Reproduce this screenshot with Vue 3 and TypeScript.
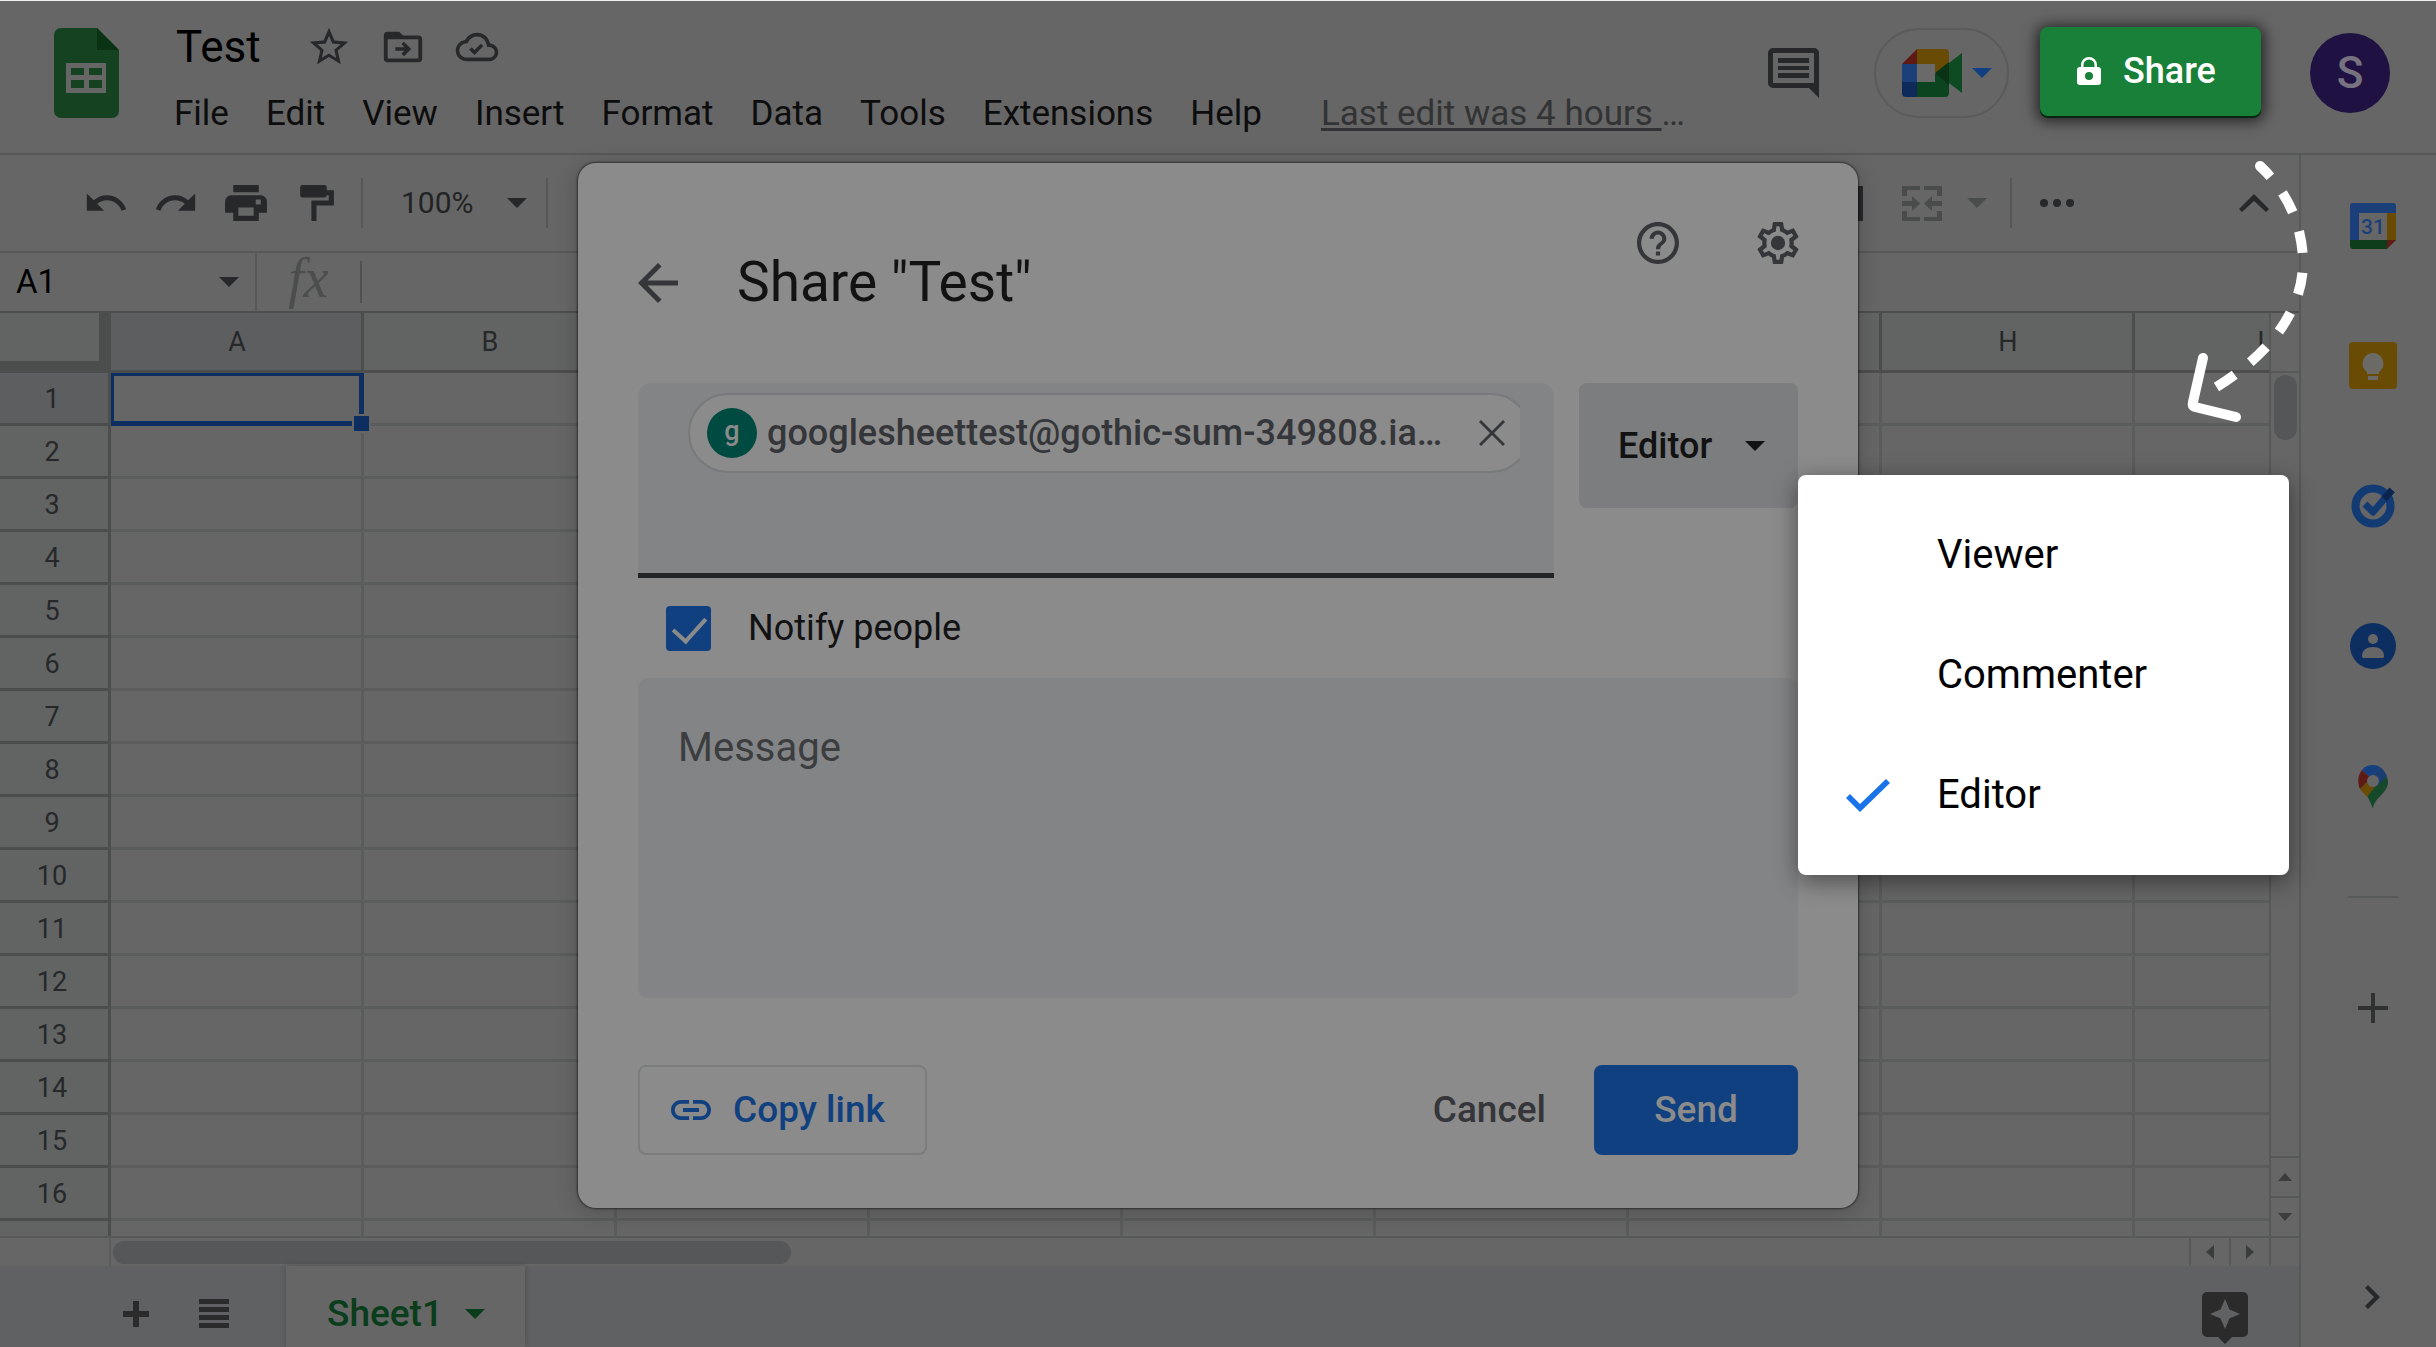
<script setup lang="ts">
import { ref } from 'vue'

const menus: string[] = ['File', 'Edit', 'View', 'Insert', 'Format', 'Data', 'Tools', 'Extensions', 'Help']
const columns: string[] = ['A', 'B', 'C', 'D', 'E', 'F', 'G', 'H', 'I']
const rows: (number | null)[] = [...Array.from({ length: 16 }, (_, i) => i + 1), null]
const roles: string[] = ['Viewer', 'Commenter', 'Editor']

const title = ref('Test')
const role = ref('Editor')
const zoom = ref('100%')
const cell = ref('A1')
const formula = ref('')
const people = ref('')
const notify = ref(true)
const message = ref('')
</script>

<template>
  <div class="app">
    <header class="header">
      <svg class="logo" viewBox="0 0 65 90" aria-hidden="true">
        <path fill="#154321" d="M7 0h36l22 22v61a7 7 0 0 1-7 7H7a7 7 0 0 1-7-7V7a7 7 0 0 1 7-7z" />
        <path fill="#0a3316" d="M43 0l22 22H43z" />
        <path fill="#666" fill-rule="evenodd" d="M12 35h40v30H12zM17 40v7h13v-7zM35 40v7h13v-7zM17 52v8h13v-8zM35 52v8h13v-8z" />
      </svg>
      <div class="doc">
        <div class="title-row">
          <input v-model="title" class="title" aria-label="Document title" />
          <button class="icon-btn" aria-label="Star">
            <svg viewBox="0 0 24 24"><path d="M22 9.24l-7.19-.62L12 2 9.19 8.63 2 9.24l5.46 4.73L5.82 21 12 17.27 18.18 21l-1.63-7.03L22 9.24zM12 15.4l-3.76 2.27 1-4.28-3.32-2.88 4.38-.38L12 6.1l1.71 4.04 4.38.38-3.32 2.88 1 4.28L12 15.4z" /></svg>
          </button>
          <button class="icon-btn" aria-label="Move">
            <svg viewBox="0 0 24 24"><path fill-rule="evenodd" d="M4 4h6l2 2h8a2 2 0 0 1 2 2v10a2 2 0 0 1-2 2H4a2 2 0 0 1-2-2V6a2 2 0 0 1 2-2zm0 4v10h16V8zM12.5 9.2 16.3 13l-3.8 3.8-1.3-1.3 1.5-1.6H8v-1.8h4.7l-1.5-1.6z" /></svg>
          </button>
          <button class="icon-btn" aria-label="Saved to Drive">
            <svg viewBox="-1 -1 26 26"><path d="M19.35 10.04C18.67 6.59 15.64 4 12 4 9.11 4 6.6 5.64 5.35 8.04 2.34 8.36 0 10.91 0 14c0 3.31 2.69 6 6 6h13c2.76 0 5-2.24 5-5 0-2.64-2.05-4.78-4.65-4.96zM19 18H6c-2.21 0-4-1.79-4-4 0-2.05 1.53-3.76 3.56-3.97l1.07-.11.5-.95C8.08 7.14 9.94 6 12 6c2.62 0 4.88 1.86 5.39 4.43l.3 1.5 1.53.11c1.56.1 2.78 1.41 2.78 2.96 0 1.65-1.35 3-3 3z" /><path d="M10.6 16.5l-3-3 1.4-1.4 1.6 1.6 3.6-3.6 1.4 1.4z" /></svg>
          </button>
        </div>
        <nav class="menu-row">
          <button v-for="m in menus" :key="m" class="menu-btn">{{ m }}</button>
          <a href="#" class="last-edit"><span class="underlined">Last edit was 4 hours&nbsp;</span>…</a>
        </nav>
      </div>
      <button class="comments" aria-label="Comments">
        <svg viewBox="0 0 51 50"><path fill-rule="evenodd" d="M5 0h41a5 5 0 0 1 5 5v45L41 40H5a5 5 0 0 1-5-5V5a5 5 0 0 1 5-5zM5 5v30h41V5zM10 10h31v5H10zM10 18h31v4H10zM10 25h31v5H10z" /></svg>
      </button>
      <button class="meet" aria-label="Meet">
        <svg class="meet-logo" viewBox="0 0 60 48">
          <path fill="#5e1b15" d="M0 15 15 0v15z" />
          <path fill="#6a4b04" d="M15 0h28a4 4 0 0 1 4 4v13L33 24v-9H15z" />
          <path fill="#1b4079" d="M0 15h15v18H0z" />
          <path fill="#0d2a5a" d="M0 33h15v15H4a4 4 0 0 1-4-4z" />
          <path fill="#0d4420" d="M15 33h18v-9l14 10v10a4 4 0 0 1-4 4H15z" />
          <path fill="#0e4a22" d="M47 14 60 4v40L47 34z" />
          <path fill="#0a3316" d="M33 24 47 13v23z" />
          <path fill="#6a6a6a" d="M15 15h18v18H15z" />
        </svg>
        <svg class="caret blue" viewBox="0 0 20 10"><path d="M0 0h20L10 10z" /></svg>
      </button>
      <button class="share">
        <svg viewBox="0 0 24 28"><path fill-rule="evenodd" d="M4 10V8a8 8 0 0 1 16 0v2h1a3 3 0 0 1 3 3v12a3 3 0 0 1-3 3H3a3 3 0 0 1-3-3V13a3 3 0 0 1 3-3zm2.500 0h11V8a5.500 5.500 0 0 0-11 0zM12 15a4 4 0 1 0 0 8 4 4 0 0 0 0-8z" /></svg>
        <span>Share</span>
      </button>
      <button class="account" aria-label="Account">S</button>
    </header>

    <div class="body">
      <main class="main">
        <div class="toolbar">
          <button class="icon-btn" aria-label="Undo"><svg viewBox="0 0 24 24"><path d="M12.5 8c-2.65 0-5.05.99-6.9 2.6L2 7v9h9l-3.62-3.62c1.39-1.16 3.16-1.88 5.12-1.88 3.54 0 6.55 2.31 7.6 5.5l2.37-.78C21.08 11.03 17.15 8 12.5 8z" /></svg></button>
          <button class="icon-btn" aria-label="Redo"><svg viewBox="0 0 24 24"><path d="M18.400 10.600C16.550 8.990 14.150 8 11.500 8c-4.650 0-8.580 3.030-9.960 7.220L3.900 16c1.050-3.190 4.050-5.500 7.600-5.500 1.950 0 3.730.72 5.120 1.880L13 16h9V7l-3.600 3.600z" /></svg></button>
          <button class="icon-btn" aria-label="Print"><svg viewBox="-2 -5 45 45"><path fill-rule="evenodd" d="M8 0h25v7H8zM6 10h29a6 6 0 0 1 6 6v11h-8v8H8v-8H0V16a6 6 0 0 1 6-6zM13 22v8h15v-8zM30 14v5h5v-5z" /></svg></button>
          <button class="icon-btn" aria-label="Paint format"><svg viewBox="-7 -5 45 45"><path d="M2 0h22a2 2 0 0 1 2 2v3h7v15H16v15h-5V15h17v-5h-2a2 2 0 0 1-2 2H2a2 2 0 0 1-2-2V2a2 2 0 0 1 2-2z" /></svg></button>
          <span class="divider"></span>
          <label class="zoom">
            <select v-model="zoom" aria-label="Zoom"><option>100%</option></select>
            <svg class="caret" viewBox="0 0 20 10"><path d="M0 0h20L10 10z" /></svg>
          </label>
          <span class="divider"></span>
          <span class="spacer"></span>
          <button class="borders" aria-label="Borders"><svg viewBox="0 0 40 35"><path fill-rule="evenodd" d="M0 0h40v35H0zM5 5v10h12V5zM22 5v10h13V5zM5 20v10h12V20zM22 20v10h13V20z" /></svg></button>
          <button class="merge" aria-label="Merge cells">
            <svg viewBox="0 0 40 35"><path d="M0 0h18v4H5v6H0zM22 0h18v10h-5V4H22zM0 25h5v6h13v4H0zM35 25h5v10H22v-4h13zM0 15h10v-5l8 7.500-8 7.500v-5H0zM40 15H30v-5l-8 7.500 8 7.500v-5h10z" /></svg>
            <svg class="caret faint" viewBox="0 0 20 10"><path d="M0 0h20L10 10z" /></svg>
          </button>
          <span class="divider"></span>
          <button class="more" aria-label="More"><svg viewBox="0 0 34 8"><circle cx="4" cy="4" r="4" /><circle cx="17" cy="4" r="4" /><circle cx="30" cy="4" r="4" /></svg></button>
          <button class="collapse" aria-label="Hide the menus"><svg viewBox="0 0 30 18"><path d="M15 0l15 15-3 3-12-11L3 18l-3-3z" /></svg></button>
        </div>

        <div class="formula-bar">
          <div class="name-box">
            <input v-model="cell" aria-label="Name box" />
            <svg class="caret" viewBox="0 0 20 10"><path d="M0 0h20L10 10z" /></svg>
          </div>
          <span class="fx">fx</span>
          <span class="fx-line"></span>
          <input v-model="formula" class="formula" aria-label="Formula" />
        </div>

        <div class="sheet">
          <div class="grid">
            <table>
              <colgroup>
                <col class="col-num" />
                <col v-for="c in columns" :key="c" class="col-data" />
              </colgroup>
              <thead>
                <tr>
                  <th class="corner"></th>
                  <th v-for="c in columns" :key="c" :class="{ active: c === 'A' }">{{ c }}</th>
                </tr>
              </thead>
              <tbody>
                <tr v-for="(r, i) in rows" :key="i">
                  <th :class="{ active: r === 1 }">{{ r }}</th>
                  <td v-for="c in columns" :key="c">
                    <div v-if="r === 1 && c === 'A'" class="selection"><span class="handle"></span></div>
                  </td>
                </tr>
              </tbody>
            </table>
          </div>
          <div class="vscroll">
            <div class="vhead"></div>
            <div class="vthumb"></div>
            <span class="spacer"></span>
            <button aria-label="Scroll up"><svg width="14" height="8" viewBox="0 0 14 8"><path d="M0 8h14L7 0z" /></svg></button>
            <button aria-label="Scroll down"><svg width="14" height="8" viewBox="0 0 14 8"><path d="M0 0h14L7 8z" /></svg></button>
          </div>
          <div class="hscroll">
            <span class="hstub"></span>
            <div class="hthumb"></div>
            <span class="spacer"></span>
            <button aria-label="Scroll left"><svg width="8" height="14" viewBox="0 0 8 14"><path d="M8 0v14L0 7z" /></svg></button>
            <button aria-label="Scroll right"><svg width="8" height="14" viewBox="0 0 8 14"><path d="M0 0v14l8-7z" /></svg></button>
          </div>
          <div class="scroll-corner"></div>
        </div>

        <footer class="tabs">
          <button class="add" aria-label="Add sheet"><svg viewBox="0 0 26 26"><path d="M10 0h6v10h10v6H16v10h-6V16H0v-6h10z" /></svg></button>
          <button class="all" aria-label="All sheets"><svg viewBox="0 0 30 29"><path d="M0 0h30v5H0zM0 8h30v5H0zM0 16h30v5H0zM0 24h30v5H0z" /></svg></button>
          <button class="tab">
            Sheet1
            <svg class="caret green" viewBox="0 0 20 10"><path d="M0 0h20L10 10z" /></svg>
          </button>
          <span class="spacer"></span>
          <button class="explore" aria-label="Explore"><svg viewBox="0 0 46 52"><path fill-rule="evenodd" d="M5 0h36a5 5 0 0 1 5 5v35a5 5 0 0 1-5 5H30l-7 7-7-7H5a5 5 0 0 1-5-5V5a5 5 0 0 1 5-5zM23 7l-4.500 10.500L8 22l10.500 4.500L23 37l4.500-10.500L38 22l-10.500-4.500z" /></svg></button>
        </footer>
      </main>

      <aside class="side">
        <button aria-label="Calendar">
          <svg viewBox="0 0 48 48">
            <path fill="#1b4079" d="M4 1h40a3 3 0 0 1 3 3v7H1V4a3 3 0 0 1 3-3z" />
            <path fill="#1a3f7c" d="M1 10h9v29H1z" />
            <path fill="#6a4b04" d="M38 11h9v28h-9z" />
            <path fill="#0e3d1c" d="M1 38h37v9H4a3 3 0 0 1-3-3z" />
            <path fill="#5e1b15" d="M38 38h9l-9 9z" />
            <path fill="#666" d="M10 11h28v27H10z" />
            <text x="24" y="32" text-anchor="middle" font-size="21" font-weight="500" fill="#1b4079">31</text>
          </svg>
        </button>
        <button aria-label="Keep">
          <svg viewBox="0 0 48 48">
            <rect width="48" height="47" rx="4" fill="#6a4b04" />
            <path fill="#6b6a66" d="M24 11a10.500 10.500 0 0 0-6 19v2h12v-2a10.500 10.500 0 0 0-6-19zM19 34h10v4H19z" />
          </svg>
        </button>
        <button aria-label="Tasks">
          <svg viewBox="0 0 48 48">
            <circle cx="24" cy="24" r="17.500" fill="none" stroke="#123a73" stroke-width="8" />
            <path d="M16 22l8 8 19-22" fill="none" stroke="#123a73" stroke-width="7" stroke-linejoin="round" />
            <path d="M35 17l8-9" fill="none" stroke="#0b2550" stroke-width="7" />
          </svg>
        </button>
        <button aria-label="Contacts">
          <svg viewBox="0 0 48 48">
            <circle cx="24" cy="24" r="23" fill="#0d2e60" />
            <circle cx="24" cy="17" r="5" fill="#666" />
            <path fill="#666" d="M13 34c0-6 5-9 11-9s11 3 11 9c0 2-1 2-3 2H16c-2 0-3 0-3-2z" />
          </svg>
        </button>
        <button aria-label="Maps">
          <svg viewBox="0 0 48 48">
            <path fill="#15492a" d="M24 46c-1 0-1-4-6-12l18-22c2 3 3 5 3 8 0 11-13 15-15 26z" />
            <path fill="#6a4b04" d="M11 27 22 16l6 6-10 13c-3-4-6-6-7-8z" />
            <path fill="#5e1b15" d="M13 8l9 8-11 11c-3-7-2-14 2-19z" />
            <path fill="#14407f" d="M13 8c6-7 15-5 18-3l-9 11z" />
            <path fill="#1c3d72" d="M31 5c3 2 5 5 7 9L27 25l-5-9z" />
            <circle cx="24" cy="19" r="6" fill="#666" />
          </svg>
        </button>
        <hr />
        <button class="side-add" aria-label="Get add-ons"><svg viewBox="0 0 30 30"><path d="M13 0h4v13h13v4H17v13h-4V17H0v-4h13z" /></svg></button>
        <span class="spacer"></span>
        <button class="side-hide" aria-label="Hide side panel"><svg viewBox="0 0 15 24"><path d="M3 0l12 12L3 24l-3-3 9-9-9-9z" /></svg></button>
      </aside>
    </div>

    <div class="overlay">
      <section class="dialog" role="dialog" aria-labelledby="share-title">
        <div class="dialog-head">
          <button class="back" aria-label="Back"><svg viewBox="4 4 16 16"><path d="M20 11H7.830l5.590-5.590L12 4l-8 8 8 8 1.410-1.410L7.830 13H20v-2z" /></svg></button>
          <h1 id="share-title">Share "Test"</h1>
          <button class="head-icon" aria-label="Help"><svg viewBox="2 2 20 20"><path d="M11 18h2v-2h-2v2zm1-16C6.480 2 2 6.480 2 12s4.480 10 10 10 10-4.480 10-10S17.520 2 12 2zm0 18c-4.410 0-8-3.590-8-8s3.590-8 8-8 8 3.590 8 8-3.590 8-8 8zm0-14c-2.210 0-4 1.790-4 4h2c0-1.100.9-2 2-2s2 .9 2 2c0 2-3 1.750-3 5h2c0-2.250 3-2.500 3-5 0-2.210-1.790-4-4-4z" /></svg></button>
          <button class="head-icon" aria-label="Settings"><svg viewBox="2 2 20 20"><path d="M19.430 12.980c.04-.32.07-.64.07-.98 0-.34-.03-.66-.07-.98l2.110-1.650c.19-.15.24-.42.12-.64l-2-3.460c-.09-.16-.26-.25-.44-.25-.06 0-.12.01-.17.03l-2.490 1c-.52-.4-1.080-.73-1.690-.98l-.38-2.650C14.460 2.180 14.250 2 14 2h-4c-.25 0-.46.18-.49.42l-.38 2.650c-.61.25-1.170.59-1.690.98l-2.490-1c-.06-.02-.12-.03-.18-.03-.17 0-.34.09-.43.25l-2 3.460c-.13.22-.07.49.12.64l2.110 1.650c-.04.32-.07.65-.07.98 0 .33.03.66.07.98l-2.110 1.650c-.19.15-.24.42-.12.64l2 3.460c.09.16.26.25.44.25.06 0 .12-.01.17-.03l2.490-1c.52.4 1.080.73 1.690.98l.38 2.650c.03.24.24.42.49.42h4c.25 0 .46-.18.49-.42l.38-2.650c.61-.25 1.170-.59 1.690-.98l2.490 1c.06.02.12.03.18.03.17 0 .34-.09.43-.25l2-3.460c.12-.22.07-.49-.12-.64l-2.110-1.650zm-1.980-1.710c.04.31.05.52.05.73 0 .21-.02.43-.05.73l-.14 1.130.89.7 1.080.84-.7 1.210-1.270-.51-1.040-.42-.9.68c-.43.32-.84.56-1.250.73l-1.060.43-.16 1.130-.2 1.350h-1.400l-.19-1.350-.16-1.130-1.060-.43c-.43-.18-.83-.41-1.230-.71l-.91-.7-1.060.43-1.270.51-.7-1.210 1.080-.84.89-.7-.14-1.130c-.03-.31-.05-.54-.05-.74s.02-.43.05-.73l.14-1.130-.89-.7-1.080-.84.7-1.210 1.270.51 1.040.42.9-.68c.43-.32.84-.56 1.250-.73l1.060-.43.16-1.130.2-1.350h1.390l.19 1.350.16 1.130 1.060.43c.43.18.83.41 1.230.71l.91.7 1.060-.43 1.270-.51.7 1.210-1.070.85-.89.7.14 1.130z" /><circle cx="12" cy="12" r="3.400" /></svg></button>
        </div>

        <div class="people">
          <div class="field">
            <div class="chip-clip">
              <div class="chip">
                <span class="chip-avatar">g</span>
                <span class="chip-text">googlesheettest@gothic-sum-349808.ia…</span>
                <button aria-label="Remove"><svg viewBox="0 0 26 26"><path d="M2 0l11 11L24 0l2 2-11 11 11 11-2 2-11-11L2 26l-2-2 11-11L0 2z" /></svg></button>
              </div>
            </div>
            <input v-model="people" aria-label="Add people" />
          </div>
          <label class="role">
            <select v-model="role" aria-label="Role">
              <option v-for="r in roles" :key="r">{{ r }}</option>
            </select>
            <svg class="caret" viewBox="0 0 20 10"><path d="M0 0h20L10 10z" /></svg>
          </label>
        </div>

        <label class="notify">
          <input v-model="notify" type="checkbox" />
          <span>Notify people</span>
        </label>

        <textarea v-model="message" placeholder="Message" aria-label="Message"></textarea>

        <div class="actions">
          <button class="copy">
            <svg viewBox="2 2 20 20"><path d="M3.900 12c0-1.710 1.390-3.100 3.100-3.100h4V7H7c-2.760 0-5 2.240-5 5s2.240 5 5 5h4v-1.900H7c-1.710 0-3.100-1.390-3.100-3.100zM8 13h8v-2H8v2zm9-6h-4v1.900h4c1.710 0 3.100 1.390 3.100 3.100s-1.390 3.100-3.100 3.100h-4V17h4c2.760 0 5-2.240 5-5s-2.240-5-5-5z" /></svg>
            Copy link
          </button>
          <span class="spacer"></span>
          <button class="cancel">Cancel</button>
          <button class="send">Send</button>
        </div>

        <div class="role-menu" role="menu">
          <button v-for="r in roles" :key="r" role="menuitemradio" :aria-checked="r === role" @click="role = r">
            <span class="check"><svg v-if="r === role" viewBox="0 0 44 33"><path d="M0 19l4-4 10 10L40 0l4 4-30 29z" /></svg></span>
            {{ r }}
          </button>
        </div>
      </section>
    </div>

    <svg class="pointer" viewBox="0 0 140 280" aria-hidden="true">
      <circle cx="80" cy="16" r="5" fill="#fff" />
      <path d="M80 16C110 44 122 78 123 110C124 164 84 208 35 238" stroke-dasharray="22 20" stroke-dashoffset="7" />
      <path d="M23 208L13 252Q12 256 15 257L56 267" stroke-linecap="round" stroke-linejoin="round" />
    </svg>
  </div>
</template>

<style>
body {
  margin: 0;
  background: #666;
}
</style>

<style scoped>
.app {
  position: relative;
  display: flex;
  flex-direction: column;
  height: 100vh;
  overflow: hidden;
  background: #666;
  color: #0d0d0e;
  fill: #26282a;
  font-family: Roboto, "Liberation Sans", sans-serif;
  font-size: 35px;
  line-height: 50px;
}
.app * {
  box-sizing: border-box;
}
button,
input,
select,
textarea {
  margin: 0;
  padding: 0;
  border: 0;
  border-radius: 0;
  outline: 0;
  background: none;
  color: inherit;
  font: inherit;
}
button {
  display: flex;
  align-items: center;
  fill: inherit;
  white-space: nowrap;
}
select {
  appearance: none;
}
svg {
  display: block;
  flex: none;
}
.spacer {
  flex: 1;
}
.icon-btn svg {
  width: 46px;
  height: 46px;
}
.caret {
  width: 20px;
  height: 10px;
}
.caret.blue {
  fill: #123f82;
}
.caret.green {
  fill: #0a3d1b;
}
.caret.faint {
  fill: #4a4b4b;
}

/* Header */
.header {
  display: flex;
  flex: none;
  align-items: center;
  height: 155px;
  padding: 0 46px 8px 54px;
  border-top: 1px solid #eef1f0;
  border-bottom: 2px solid #575858;
}
.logo {
  width: 65px;
  height: 90px;
}
.doc {
  flex: 1;
  align-self: flex-start;
  margin-left: 55px;
  padding-top: 16px;
}
.title-row {
  display: flex;
  align-items: center;
  gap: 28px;
  height: 60px;
}
.title {
  width: 104px;
  height: 60px;
  padding-left: 2px;
  color: #000;
  font-size: 44px;
}
.menu-row {
  display: flex;
  gap: 37px;
  margin-top: 12px;
}
.last-edit {
  margin-left: 22px;
  color: #323334;
  text-decoration: none;
}
.underlined {
  text-decoration: underline;
  text-decoration-thickness: 3px;
  text-underline-offset: 3px;
  text-decoration-skip-ink: none;
}
.comments svg {
  width: 51px;
  height: 50px;
}
.meet {
  gap: 10px;
  width: 135px;
  height: 90px;
  margin: 0 31px 0 55px;
  padding-left: 26px;
  border: 2px solid #5a5b5b;
  border-radius: 45px;
}
.meet-logo {
  width: 60px;
  height: 48px;
}
.share {
  gap: 22px;
  width: 221px;
  height: 89px;
  margin: 0 49px 4px 0;
  padding-left: 37px;
  border-radius: 8px;
  background: #188038;
  box-shadow: 0 2px 0 #07260f, 0 2px 14px 4px rgba(0, 0, 0, 0.6);
  color: #fff;
  fill: #fff;
  font-size: 36px;
  font-weight: 500;
}
.share svg {
  width: 24px;
  height: 28px;
}
.account {
  justify-content: center;
  width: 80px;
  height: 80px;
  border-radius: 50%;
  background: #201143;
  color: #77727f;
  font-size: 44px;
  font-weight: 500;
}

/* Sheet frame */
.body {
  display: flex;
  flex: 1;
  min-height: 0;
}
.main {
  display: flex;
  flex: 1;
  flex-direction: column;
  min-width: 0;
}
.toolbar {
  display: flex;
  flex: none;
  align-items: center;
  height: 98px;
  padding: 0 30px 0 83px;
  border-bottom: 2px solid #575858;
}
.toolbar .icon-btn {
  margin-right: 24px;
}
.toolbar .icon-btn:nth-child(4) {
  margin-right: 22px;
}
.divider {
  width: 2px;
  height: 50px;
  background: #565757;
}
.zoom {
  display: flex;
  align-items: center;
  justify-content: space-between;
  width: 126px;
  margin: 0 19px 0 38px;
  color: #222324;
  font-size: 30px;
}
.zoom select {
  width: 90px;
}
.borders svg,
.merge svg:first-child {
  width: 40px;
  height: 35px;
}
.merge {
  gap: 25px;
  margin: 0 23px 0 39px;
  fill: #4a4b4b;
}
.more {
  margin: 0 165px 0 28px;
}
.more svg {
  width: 34px;
  height: 8px;
}
.collapse svg {
  width: 30px;
  height: 18px;
}
.formula-bar {
  display: flex;
  flex: none;
  align-items: center;
  height: 60px;
  border-bottom: 2px solid #4d4e4e;
}
.name-box {
  display: flex;
  align-items: center;
  width: 257px;
  height: 58px;
  padding: 0 16px;
  border-right: 2px solid #575858;
}
.name-box input {
  flex: 1;
  min-width: 0;
  color: #000;
  font-size: 33px;
}
.fx {
  width: 103px;
  padding-bottom: 8px;
  color: #4c4d4d;
  font-family: "Liberation Serif", serif;
  font-size: 56px;
  font-style: italic;
  text-align: center;
}
.fx-line {
  width: 2px;
  height: 42px;
  background: #505151;
}
.formula {
  flex: 1;
  padding-left: 16px;
}
.sheet {
  display: grid;
  flex: 1;
  grid-template-columns: minmax(0, 1fr) 30px;
  grid-template-rows: minmax(0, 1fr) 30px;
  min-height: 0;
}
.grid {
  overflow: hidden;
}
table {
  width: 2388px;
  border-collapse: separate;
  border-spacing: 0;
  table-layout: fixed;
  font-size: 27px;
  line-height: 32px;
}
.col-num {
  width: 111px;
}
.col-data {
  width: 253px;
}
th,
td {
  height: 53px;
  padding: 0;
  border: solid #5b5d5c;
  border-width: 0 3px 3px 0;
}
th {
  border-color: #4c4d4d;
  background: #626463;
  color: #26282a;
  font-weight: 400;
  text-align: center;
}
thead th {
  height: 60px;
  padding-left: 2px;
}
tbody th {
  padding: 2px 4px 0 0;
}
th.active {
  background: #5d5e60;
}
.corner {
  border-width: 0 12px 12px 0;
}
td {
  position: relative;
}
.selection {
  position: absolute;
  inset: 0 -3px -3px 0;
  z-index: 1;
  border: solid #0d2e61;
  border-width: 3px 5px 5px 3px;
}
.handle {
  position: absolute;
  right: -12px;
  bottom: -12px;
  width: 19px;
  height: 19px;
  border: 2px solid #666;
  background: #0d2e61;
}
.vscroll {
  display: flex;
  flex-direction: column;
  border-left: 2px solid #575858;
  fill: #3b3c3c;
}
.vhead {
  height: 60px;
  border-bottom: 2px solid #575858;
}
.vthumb {
  width: 23px;
  height: 65px;
  margin: 2px 0 0 3px;
  border-radius: 12px;
  background: #555657;
}
.vscroll button {
  justify-content: center;
  height: 40px;
  border-top: 2px solid #575858;
}
.hscroll {
  display: flex;
  align-items: center;
  border-top: 2px solid #575858;
  fill: #3b3c3c;
}
.hstub {
  align-self: stretch;
  width: 111px;
  border-right: 2px solid #5b5c5c;
}
.hthumb {
  width: 678px;
  height: 23px;
  margin-left: 2px;
  border-radius: 12px;
  background: #565758;
}
.hscroll button {
  justify-content: center;
  width: 40px;
  height: 28px;
  border-left: 2px solid #575858;
}
.scroll-corner {
  border-top: 2px solid #575858;
  border-left: 2px solid #575858;
}
.tabs {
  display: flex;
  flex: none;
  align-items: stretch;
  height: 81px;
  padding: 0 51px 0 123px;
  background: #5f6162;
  fill: #2b2b2b;
}
.tabs button {
  padding-top: 14px;
}
.add svg {
  width: 26px;
  height: 26px;
}
.all {
  margin: 0 57px 0 50px;
}
.all svg {
  width: 30px;
  height: 29px;
}
.tabs .tab {
  gap: 22px;
  padding: 14px 40px 0 41px;
  background: #666;
  box-shadow: 0 0 6px rgba(0, 0, 0, 0.2);
  color: #0a3d1b;
  font-size: 37px;
  font-weight: 500;
}
.tabs .explore {
  padding-top: 23px;
}
.explore svg {
  width: 46px;
  height: 52px;
}

/* Side panel */
.side {
  display: flex;
  flex: none;
  flex-direction: column;
  align-items: center;
  width: 137px;
  padding: 47px 0 38px 8px;
  border-left: 2px solid #575858;
}
.side button {
  margin-bottom: 92px;
}
.side svg {
  width: 48px;
  height: 48px;
}
.side hr {
  width: 50px;
  height: 2px;
  margin: -6px 0 95px;
  border: 0;
  background: #575858;
}
.side-add {
  fill: #303131;
}
.side .side-add svg {
  width: 30px;
  height: 30px;
}
.side .side-hide {
  margin-bottom: 0;
}
.side .side-hide svg {
  width: 15px;
  height: 24px;
}

/* Dialog */
.overlay {
  position: absolute;
  inset: 163px 0 auto;
  display: flex;
  justify-content: center;
}
.dialog {
  position: relative;
  width: 1280px;
  padding: 0 60px 53px;
  border-radius: 18px;
  background: #8b8b8b;
  box-shadow: 0 0 2px 1px rgba(0, 0, 0, 0.5), 0 4px 20px 4px rgba(0, 0, 0, 0.14);
  color: #121213;
  fill: #343639;
}
.dialog-head {
  display: flex;
  align-items: flex-start;
  height: 220px;
}
.back {
  height: 64px;
  margin-top: 88px;
}
.back svg {
  width: 40px;
  height: 40px;
}
h1 {
  flex: 1;
  margin: 87px 0 0 59px;
  font-size: 55px;
  font-weight: 400;
  line-height: 64px;
}
.head-icon {
  margin: 59px -1px 0 79px;
}
.head-icon svg {
  width: 42px;
  height: 42px;
}
.people {
  display: flex;
  align-items: flex-start;
  gap: 25px;
  font-size: 36px;
}
.field {
  flex: 1;
  min-width: 0;
  height: 195px;
  padding: 10px 34px 0 50px;
  border-bottom: 5px solid #232526;
  border-radius: 14px 14px 0 0;
  background: #838486;
}
.field > input {
  width: 100%;
}
.chip-clip {
  overflow: hidden;
}
.chip {
  display: flex;
  align-items: center;
  width: calc(100% + 11px);
  height: 80px;
  padding-left: 17px;
  border: 2px solid #77797b;
  border-radius: 40px;
  background: #8b8b8b;
  color: #343639;
  font-weight: 500;
}
.chip-avatar {
  width: 50px;
  height: 50px;
  margin-right: 10px;
  border-radius: 50%;
  background: #004b41;
  color: #8b8b8b;
  font-size: 27px;
  line-height: 46px;
  text-align: center;
}
.chip-text {
  width: 712px;
}
.chip svg {
  width: 26px;
  height: 26px;
}
.role {
  display: flex;
  align-items: center;
  justify-content: space-between;
  width: 219px;
  height: 125px;
  padding: 0 33px 0 39px;
  border-radius: 8px;
  background: #7c7d7f;
  font-weight: 500;
  fill: #121213;
}
.role select {
  width: 110px;
}
.notify {
  display: flex;
  align-items: center;
  gap: 37px;
  height: 100px;
  padding-left: 28px;
  font-size: 36px;
}
.notify input {
  position: relative;
  width: 45px;
  height: 45px;
  border-radius: 4px;
  appearance: none;
}
.notify input:checked {
  background: #10407f;
}
.notify input:checked::after {
  position: absolute;
  top: 4px;
  left: 14px;
  width: 15px;
  height: 28px;
  border: solid #8b8b8b;
  border-width: 0 4px 4px 0;
  content: "";
  transform: rotate(42deg);
}
textarea {
  display: block;
  width: 100%;
  height: 320px;
  padding: 45px 40px;
  border-radius: 10px;
  background: #838486;
  font-size: 40px;
  resize: none;
}
textarea::placeholder {
  color: #3b3d3f;
  opacity: 1;
}
.actions {
  display: flex;
  align-items: center;
  margin-top: 67px;
  font-size: 37px;
  font-weight: 500;
}
.copy {
  gap: 22px;
  width: 289px;
  height: 90px;
  padding-left: 31px;
  border: 2px solid #7b7c7e;
  border-radius: 8px;
  color: #10407f;
  fill: #10407f;
}
.copy svg {
  width: 40px;
  height: 40px;
}
.cancel {
  margin-right: 48px;
  color: #343639;
}
.send {
  justify-content: center;
  width: 204px;
  height: 90px;
  border-radius: 8px;
  background: #10407f;
  color: #8b8b8b;
}
.role-menu {
  position: absolute;
  top: 312px;
  left: 1220px;
  width: 491px;
  padding: 20px 0;
  border-radius: 8px;
  background: #fff;
  box-shadow: 0 6px 24px rgba(0, 0, 0, 0.45);
  color: #000;
  fill: #1a73e8;
  font-size: 40px;
}
.role-menu button {
  width: 100%;
  height: 120px;
  padding-left: 48px;
}
.check {
  width: 91px;
}
.check svg {
  width: 44px;
  height: 33px;
}
.pointer {
  position: absolute;
  top: 150px;
  right: 116px;
  width: 140px;
  height: 280px;
  fill: none;
  stroke: #fff;
  stroke-width: 10px;
  pointer-events: none;
}
.pointer circle {
  stroke: none;
}
</style>
